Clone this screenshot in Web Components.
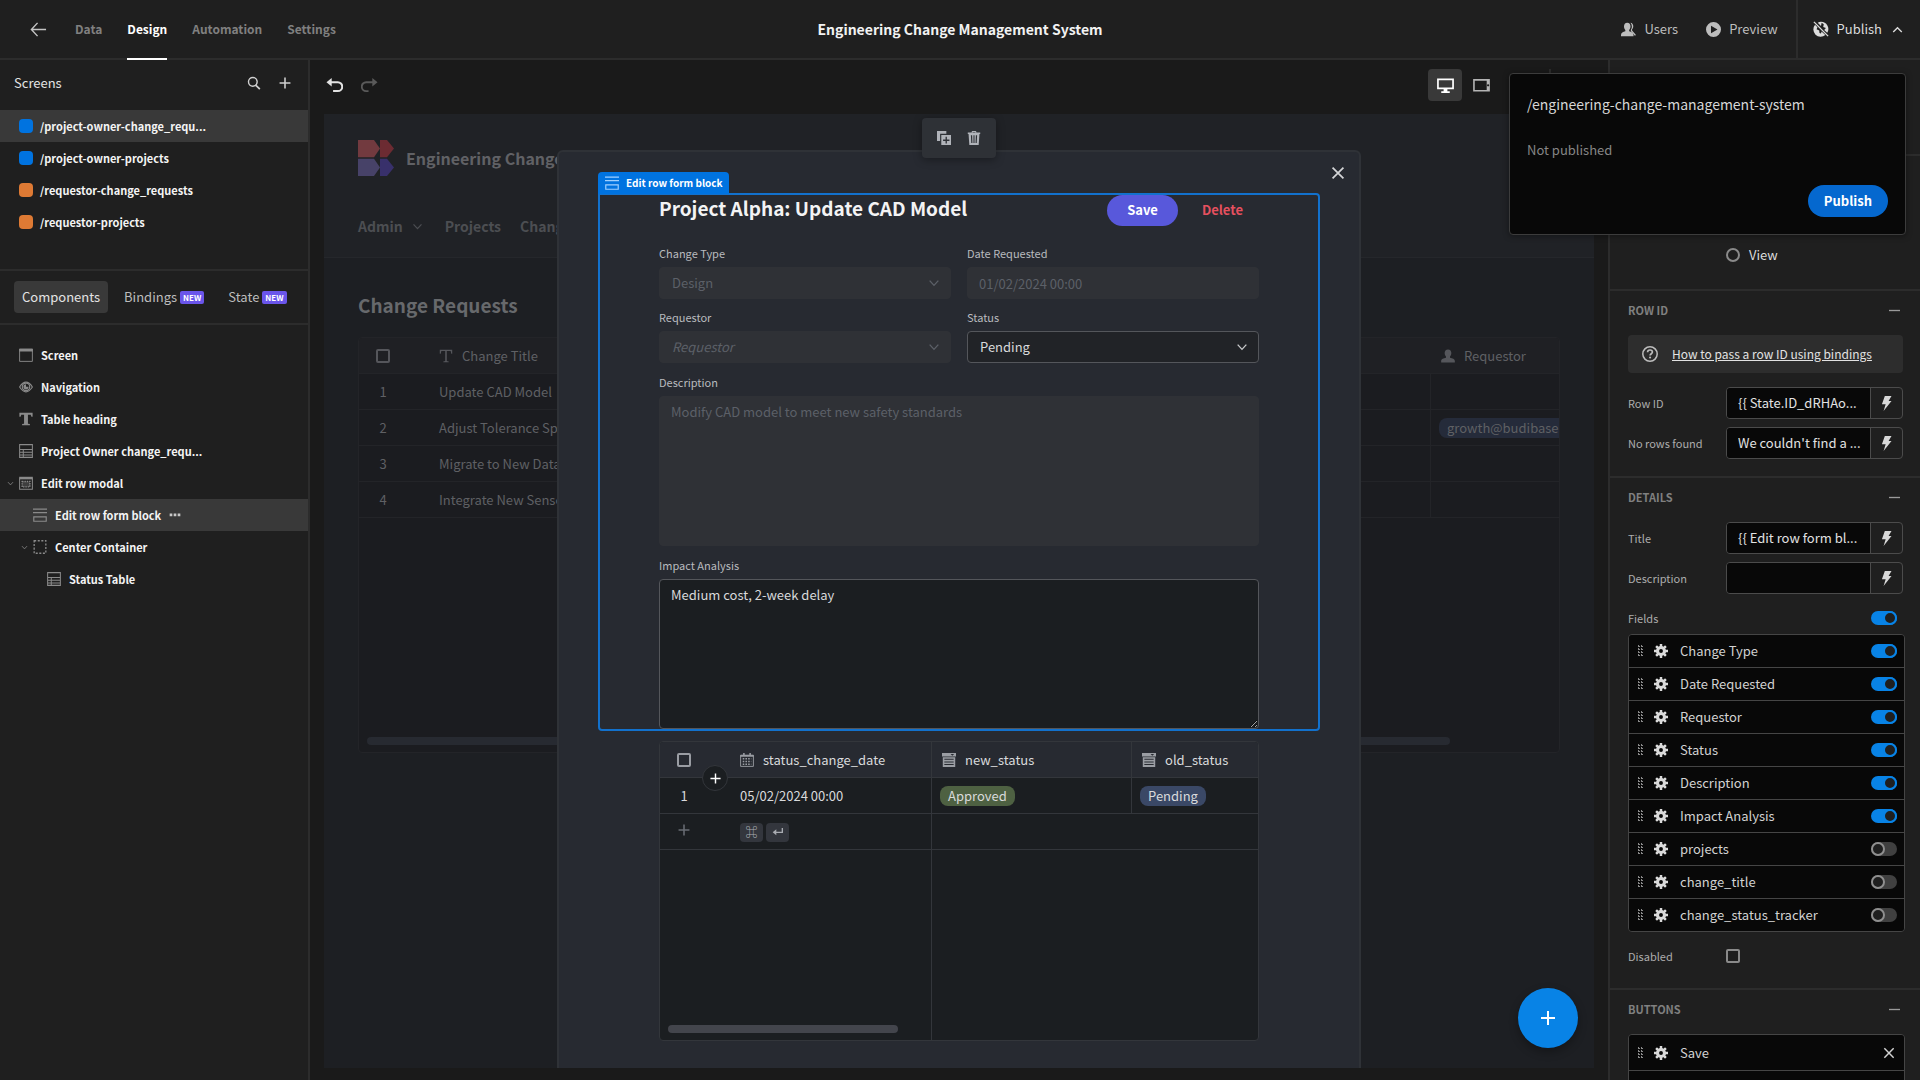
<!DOCTYPE html>
<html lang="en">
<head>
<meta charset="utf-8">
<title>Engineering Change Management System</title>
<style>
  html, body { margin: 0; height: 100%; }
  body {
    background: #1a1a1a;
    color: #e8e8e8;
    font-family: "Noto Sans CJK SC", "Noto Sans", sans-serif;
    font-size: 13px;
    line-height: 20px;
    overflow: hidden;
  }
</style>
</head>
<body>
<builder-app></builder-app>
<script>
const BASE = `
  *, *::before, *::after { box-sizing: border-box; }
  :host { display: block; box-sizing: border-box; }
  :host([hidden]) { display: none; }
  button, input, select, textarea { font: inherit; color: inherit; margin: 0; }
  button { background: none; border: 0; padding: 0; display: inline-flex; align-items: center; justify-content: center; }
  a { color: inherit; text-decoration: none; }
  h1, h2, p, ul { margin: 0; padding: 0; font-size: inherit; }
  ul { list-style: none; }
`;

function define(name, css, html, ready) {
  customElements.define(name, class extends HTMLElement {
    constructor() {
      super();
      this.attachShadow({ mode: "open" });
    }
    connectedCallback() {
      if (this.shadowRoot.childNodes.length) return;
      const t = document.createElement("template");
      t.innerHTML = `<style>${BASE}${css}</style>` + (typeof html === "function" ? html(this) : html);
      this.shadowRoot.append(t.content.cloneNode(true));
      if (ready) ready(this);
    }
  });
}

/* ---------- icons, drawn on an 18 unit grid ---------- */
const S = 'fill="none" stroke="currentColor"';
const ICONS = {
  back: `<path ${S} stroke-width="1.5" d="M17 9H1.5M8 2L1.5 9L8 16"/>`,
  search: `<circle ${S} stroke-width="1.8" cx="7.5" cy="7.5" r="5.6"/><path ${S} stroke-width="2.2" d="M11.5 12l5 5"/>`,
  plus: `<path ${S} stroke-width="2" d="M9 2v14M2 9h14"/>`,
  undo: `<path fill="currentColor" d="M6 1v9L.5 5.500z"/><path ${S} stroke-width="2.200" d="M5 5.500h7.500a3.900 3.900 0 0 1 0 9.400H7.500"/>`,
  redo: `<path fill="currentColor" d="M12 1v9l5.500-4.500z"/><path ${S} stroke-width="2" d="M13 5.500H5.500a3.900 3.900 0 0 0 0 9.400H8"/>`,
  desktop: `<path ${S} stroke-width="1.800" d="M1 2.500h16v9.600H1z"/><path fill="currentColor" d="M7 12h4v3h2.500v2h-9v-2H7z"/>`,
  tablet: `<path ${S} stroke-width="1.700" d="M1 3h16v11.500H1z"/><path fill="currentColor" d="M14.500 3h2.500v11.500h-2.500z"/><circle cx="16" cy="8.800" r="1.200" fill="#1a1a1a"/>`,
  users: `<path fill="currentColor" d="M7.500 1c2.600 0 3.900 1.900 3.900 4.300 0 1.900-.7 3.300-1.600 4.200v1.600c2.700.7 5.200 1.600 5.200 4.400V17H0v-1.500c0-2.800 2.500-3.700 5.200-4.400V9.500C4.300 8.600 3.600 7.200 3.600 5.300 3.600 2.900 4.900 1 7.500 1z"/><path fill="currentColor" d="M11.300.8c2.300.2 3.400 2 3.400 4.200 0 1.700-.6 2.900-1.400 3.800v1.300l4.700 5.500-1.300.9-4.900-5.600V9.200c.8-1.100 1.300-2.400 1.200-4.200-.1-1.700-.700-3.100-1.700-4.200z"/>`,
  play: `<path fill="currentColor" fill-rule="evenodd" d="M9 0a9 9 0 1 1 0 18A9 9 0 0 1 9 0zM6 4.500v9L13.800 9z"/>`,
  offline: `<path fill="currentColor" d="M9 .8a8.200 8.200 0 0 1 7 12.500L12.600 10l1.900-2-3-1.300.6-3L9.700 2 9 5.600 5.300 2A8 8 0 0 1 9 .8zM2.300 4.300L5 7l-1 2.400 3 1.400.3 2.700 1.700.6.600-2.300 4.300 4A8.200 8.200 0 0 1 2.300 4.300z"/><path ${S} stroke-width="1.500" d="M1 1l16 16"/>`,
  up: `<path ${S} stroke-width="2.200" d="M2 13l7-7 7 7"/>`,
  down: `<path ${S} stroke-width="2" d="M2.500 5.500L9 12.500l6.500-7"/>`,
  copy: `<path fill="currentColor" d="M0 0h12v3.500H4V13H0z"/><path fill="currentColor" fill-rule="evenodd" d="M5.500 5H18v13H5.500zM11 7.500V11H7.800v1.700H11V16h1.700v-3.300H16V11h-3.300V7.500z"/>`,
  trash: `<path fill="currentColor" fill-rule="evenodd" d="M6 1.500C6 .5 6.500 0 7.500 0h3c1 0 1.500.5 1.500 1.500V2h5v1.800h-1L15 18H3L2 3.800H1V2h5zM7.200 2h3.600V1.200H7.200zM5 5.500l.5 10H7l-.4-10zm3.300 0v10h1.400v-10zm3.100 0l-.4 10h1.500l.5-10z"/>`,
  close: `<path ${S} stroke-width="2.200" d="M2 2l14 14M16 2L2 16"/>`,
  form: `<path ${S} stroke-width="1.500" d="M0 1.500h18M0 6h18M1 11.500h16v5.500H1z"/>`,
  screen: `<path ${S} stroke-width="1.200" d="M.8 1.500h16.400v15.700H.8z"/><path fill="currentColor" d="M.2 1h17.600v3.500H.2z"/>`,
  eye: `<path ${S} stroke-width="1.500" d="M.8 9C4 4 6.500 2.800 9 2.800S14 4 17.200 9C14 14 11.500 15.200 9 15.200S4 14 .8 9z"/><circle ${S} stroke-width="1.500" cx="9" cy="8.800" r="4.800"/><path fill="currentColor" d="M9 5.500a3.300 3.300 0 1 0 3.300 3.300H9z"/>`,
  text: `<path fill="currentColor" d="M.5 1h17v5H16l-1-2.500h-3.500V15L14 15.500V17H4v-1.500l2.500-.5V3.500H3L2 6H.5z"/>`,
  thin: `<path fill="currentColor" d="M1 1h16v5h-1.200L15 2.500h-5V15.500l2.500.6V17h-7v-.9l2.500-.6V2.500H3L2.200 6H1z"/>`,
  table: `<path ${S} stroke-width="1.300" d="M.8.8h16.400v16.400H.8zM.8 7.200h16.400M.8 10.500h16.400M.8 14h16.400M5.500 7.200v10"/>`,
  modal: `<path fill="currentColor" d="M.2 1h17.600v3.300H.2z"/><path ${S} stroke-width="1.300" d="M.8 3v14h16.400V3"/><path fill="currentColor" fill-opacity=".3" stroke="currentColor" stroke-width="1.800" stroke-dasharray="1.800 1.200" d="M4 7h10v7H4z"/>`,
  box: `<path ${S} stroke-width="1.700" stroke-dasharray="2.600 2" d="M1.500 1h15v16h-15z"/>`,
  dots: `<path fill="currentColor" d="M1 6.800h4v4H1zM7 6.800h4v4H7zM13 6.800h4v4h-4z"/>`,
  user: `<path fill="currentColor" d="M9 .5c2.900 0 4.300 2 4.300 4.600 0 2-.7 3.500-1.700 4.400v1.700c3 .7 6.200 1.600 6.200 4.500V17.500H.2v-1.800c0-2.900 3.200-3.800 6.200-4.500V9.500c-1-.9-1.700-2.400-1.700-4.400C4.700 2.500 6.100.5 9 .5z"/>`,
  calendar: `<path ${S} stroke-width="1.200" d="M.8 2.800h16.400v14.400H.8z"/><path fill="currentColor" d="M.5 2.500h17v2.400H.5zM4 0h2v4H4zM12 0h2v4h-2z"/><path ${S} stroke-width="2" stroke-dasharray="2 1.500" d="M3.500 7.500h11M3.500 11h11M3.500 14.500h11"/>`,
  select: `<path fill="currentColor" fill-rule="evenodd" d="M0 0h18v4.500H0zm11 1.200L13.300 3.500l2.300-2.300z"/><path fill="currentColor" fill-rule="evenodd" d="M1 5.500h16V18H1zm2 2v1.300h12V7.500zm0 3.300v1.300h12v-1.300zm0 3.300v1.300h12v-1.300z"/>`,
  enter: `<path fill="currentColor" d="M6.500 5v9L1 9.500z"/><path ${S} stroke-width="2" d="M5 9.500h10.500V3"/>`,
  help: `<circle ${S} stroke-width="1.700" cx="9" cy="9" r="8.100"/><path ${S} stroke-width="1.900" d="M6.300 7c0-1.600 1.100-2.500 2.700-2.500s2.700.9 2.700 2.300c0 1.900-2.600 2-2.600 4"/><circle cx="9.100" cy="13" r="1.200" fill="currentColor"/>`,
  bolt: `<path fill="currentColor" d="M7 0h8l-3.500 6H15L5.500 18 8 10H3.500z"/>`,
  gear: `<path ${S} stroke-width="3.200" d="M9 0v18M0 9h18M2.700 2.700l12.600 12.600M15.300 2.700L2.700 15.300"/><circle cx="9" cy="9" r="6.500" fill="currentColor"/><circle cx="9" cy="9" r="2.500" fill="#080808"/>`,
  minus: `<path ${S} stroke-width="2.200" d="M0 9h18"/>`,
  logo: `<path fill="#723a3f" d="M0 0h8l3 4.300-3 4.300H0z"/><path fill="#6c2b32" d="M11 0h3.500L18 4.300l-3.500 4.300H11z"/><path fill="#474268" d="M0 9.400h8l3 4.300-3 4.300H0z"/><path fill="#38306b" d="M11 9.400h3.500l3.500 4.300-3.500 4.300H11z"/>`
};
define("ui-icon", `
  :host { display: inline-block; flex: none; width: var(--size, 14px); height: var(--size, 14px); }
  svg { display: block; width: 100%; height: 100%; }
`, el => `<svg viewBox="0 0 18 18" aria-hidden="true">${ICONS[el.getAttribute("name")]}</svg>`);

/* ---------- top bar ---------- */
define("top-bar", `
  :host { background: #1f1f1f; border-bottom: 2px solid #2c2c2c; height: 60px; flex: none; }
  header { display: grid; grid-template-columns: 1fr auto 1fr; height: 58px; align-items: center; }
  nav { display: flex; gap: 25px; padding-left: 30px; align-items: center; font-size: 12px; font-weight: 700; color: #808080; height: 58px; }
  nav button { width: 20px; justify-content: flex-start; color: #c4c4c4; --size: 17px; }
  nav a { display: flex; align-items: center; height: 60px; margin-bottom: -2px; border-bottom: 2px solid transparent; }
  nav a[aria-current] { color: #fff; border-color: #fff; }
  h1 { font-size: 14px; font-weight: 700; color: #f2f2f2; }
  .right { display: flex; justify-content: flex-end; align-items: center; height: 58px; color: #bdbdbd; }
  .right button { gap: 8px; margin-right: 28px; --size: 15px; }
  .right .preview { margin-right: 18px; }
  .right .pub { gap: 8px; margin: 0; height: 58px; border-left: 2px solid #2c2c2c; padding: 0 17px 0 15px; color: #dcdcdc; --size: 16px; }
  .pub .chev { --size: 11px; margin-left: 2px; }
`, `
  <header>
    <nav>
      <button aria-label="Back"><ui-icon name="back"></ui-icon></button>
      <a href="#data">Data</a><a href="#design" aria-current="page">Design</a><a href="#automation">Automation</a><a href="#settings">Settings</a>
    </nav>
    <h1>Engineering Change Management System</h1>
    <div class="right">
      <button><ui-icon name="users"></ui-icon>Users</button>
      <button class="preview"><ui-icon name="play"></ui-icon>Preview</button>
      <button class="pub"><ui-icon name="offline"></ui-icon>Publish<ui-icon class="chev" name="up"></ui-icon></button>
    </div>
  </header>`);

/* ---------- left panel ---------- */
define("nav-row", `
  :host { display: flex; align-items: center; height: 32px; padding-left: calc(4px + var(--depth, 0) * 14px); font-size: 11px; font-weight: 700; color: #f4f4f4; }
  :host([selected]) { background: #393939; }
  .chev { width: 15px; display: flex; padding-left: 3px; --size: 7px; color: #8c8c8c; }
  .mark { display: flex; width: 14px; color: #8a8a8a; --size: 14px; }
  .dot { width: 14px; height: 14px; border-radius: 4px; background: var(--dot); }
  .label { margin-left: 8px; }
  :host(:not([icon])) .label { margin-left: 7px; }
  .more { margin-left: 8px; color: #c8c8c8; --size: 12px; display: flex; }
`, el => `
  <span class="chev">${el.hasAttribute("open") ? '<ui-icon name="down"></ui-icon>' : ""}</span>
  <span class="mark">${el.hasAttribute("icon") ? `<ui-icon name="${el.getAttribute("icon")}"></ui-icon>` : '<span class="dot"></span>'}</span>
  <span class="label"><slot></slot></span>
  ${el.hasAttribute("more") ? '<span class="more"><ui-icon name="dots"></ui-icon></span>' : ""}`);

define("left-panel", `
  :host { width: 310px; flex: none; background: #1f1f1f; border-right: 2px solid #2c2c2c; }
  .head { display: flex; align-items: center; height: 50px; padding: 0 16px 4px 14px; gap: 17px; color: #d0d0d0; --size: 14px; }
  h2 { flex: 1; font-weight: 400; color: #e4e4e4; }
  .list { padding-bottom: 31px; }
  .blue { --dot: #0073e0; }
  .orange { --dot: #de7a34; }
  .tabs { display: flex; align-items: center; border: solid #2c2c2c; border-width: 2px 0; height: 56px; padding: 0 14px; color: #bcbcbc; }
  .tabs button { height: 32px; padding: 0 8px; border-radius: 4px; gap: 3px; margin-right: 8px; }
  .tabs button[aria-selected=true] { background: #393939; color: #e4e4e4; }
  .new { background: #6a55ea; color: #fff; font-size: 8px; font-weight: 700; line-height: 13px; padding: 0 3px; border-radius: 2px; }
  .tree { padding-top: 14px; }
  .d1 { --depth: 1; } .d2 { --depth: 2; }
`, `
  <div class="head"><h2>Screens</h2>
    <button aria-label="Search"><ui-icon name="search"></ui-icon></button>
    <button aria-label="Add screen"><ui-icon name="plus"></ui-icon></button></div>
  <div class="list">
    <nav-row class="blue" selected>/project-owner-change_requ...</nav-row>
    <nav-row class="blue">/project-owner-projects</nav-row>
    <nav-row class="orange">/requestor-change_requests</nav-row>
    <nav-row class="orange">/requestor-projects</nav-row>
  </div>
  <div class="tabs" role="tablist">
    <button role="tab" aria-selected="true">Components</button>
    <button role="tab">Bindings<span class="new">NEW</span></button>
    <button role="tab">State<span class="new">NEW</span></button>
  </div>
  <div class="tree">
    <nav-row icon="screen">Screen</nav-row>
    <nav-row icon="eye">Navigation</nav-row>
    <nav-row icon="text">Table heading</nav-row>
    <nav-row icon="table">Project Owner change_requ...</nav-row>
    <nav-row icon="modal" open>Edit row modal</nav-row>
    <nav-row class="d1" icon="form" selected more>Edit row form block</nav-row>
    <nav-row class="d1" icon="box" open>Center Container</nav-row>
    <nav-row class="d2" icon="table">Status Table</nav-row>
  </div>`);

/* ---------- data grids ---------- */
const GRID = `
  :host { display: block; position: relative; background: var(--grid-bg); border: 1px solid var(--grid-line); border-radius: 4px; overflow: hidden; }
  table { table-layout: fixed; border-collapse: separate; border-spacing: 0; text-align: left; }
  th, td { height: 36px; padding: 0 10px; font-weight: 400; border-bottom: 1px solid var(--grid-line); border-right: 1px solid var(--grid-line); white-space: nowrap; overflow: hidden; }
  th { background: var(--grid-head); }
  th:first-child, td:first-child { border-right: 0; padding: 0 22px 0 0; text-align: center; }
  .h { display: flex; align-items: center; gap: 9px; --size: 14px; }
  .h ui-icon { color: var(--grid-icon); }
  input { appearance: none; display: block; width: 14px; height: 14px; border: 2px solid var(--grid-icon); border-radius: 2px; margin: 0 auto; }
  .tag { display: inline-block; line-height: 20px; height: 20px; border-radius: 8px; padding: 0 8px; vertical-align: middle; margin-left: -2px; }
  .bar { position: absolute; left: 8px; bottom: 7px; height: 8px; border-radius: 4px; background: var(--grid-bar); }
`;
define("requests-grid", GRID + `
  :host { --grid-bg: #1b1c20; --grid-head: #1f2024; --grid-line: #232428; --grid-icon: #55565b; --grid-bar: #272a31; height: 416px; color: #5f6064; }
  table { width: 1472px; }
  th:not(:last-child) { border-right: 0; }
  .tag { background: #252b3a; }
  .bar { width: calc(100% - 117px); }
`, () => `
  <table>
    <colgroup><col style="width:70px"><col style="width:202px"><col style="width:200px"><col style="width:200px"><col style="width:200px"><col style="width:200px"><col style="width:200px"><col style="width:200px"></colgroup>
    <thead><tr><th><input type="checkbox" aria-label="Select all"></th><th><span class="h"><ui-icon name="thin"></ui-icon>Change Title</span></th><th></th><th></th><th></th><th></th><th><span class="h"><ui-icon name="user"></ui-icon>Requestor</span></th><th></th></tr></thead>
    <tbody>${["Update CAD Model", "Adjust Tolerance Spe", "Migrate to New Data", "Integrate New Senso"].map((t, i) =>
      `<tr><td>${i + 1}</td><td>${t}</td><td></td><td></td><td></td><td></td><td>${i === 1 ? '<span class="tag">growth@budibase.com</span>' : ""}</td><td></td></tr>`).join("")}</tbody>
  </table><div class="bar"></div>`);

define("status-grid", GRID + `
  :host { --grid-bg: #1b1e21; --grid-head: #272a31; --grid-line: #33363b; --grid-icon: #9a9da3; --grid-bar: #43454c; color: #d9dadc; height: 300px; }
  table { width: 672px; }
  .tag.green { background: #4e6142; } .tag.blue { background: #3a4866; }
  kbd { font: inherit; font-size: 12px; font-weight: 700; display: inline-flex; align-items: center; justify-content: center; width: 23px; height: 19px; border-radius: 4px; background: #33363d; color: #a9acb2; --size: 12px; vertical-align: middle; margin-right: 3px; }
  .fill td { height: 190px; border-bottom: 0; }
  .add { color: #686c73; --size: 14px; }
  .bar { width: 230px; }
`, `
  <table>
    <colgroup><col style="width:70px"><col style="width:202px"><col style="width:200px"><col style="width:200px"></colgroup>
    <thead><tr><th><input type="checkbox" aria-label="Select all"></th>
      <th><span class="h"><ui-icon name="calendar"></ui-icon>status_change_date</span></th>
      <th><span class="h"><ui-icon name="select"></ui-icon>new_status</span></th>
      <th><span class="h"><ui-icon name="select"></ui-icon>old_status</span></th></tr></thead>
    <tbody>
      <tr><td>1</td><td>05/02/2024 00:00</td><td><span class="tag green">Approved</span></td><td><span class="tag blue">Pending</span></td></tr>
      <tr><td><button class="add" aria-label="Add row"><ui-icon name="plus"></ui-icon></button></td><td><kbd>⌘</kbd><kbd><ui-icon name="enter"></ui-icon></kbd></td><td colspan="2"></td></tr>
      <tr class="fill"><td></td><td></td><td colspan="2"></td></tr>
    </tbody>
  </table><div class="bar"></div>`);

/* ---------- form fields of the preview ---------- */
define("form-field", `
  :host { font-size: 13px; }
  label { display: block; font-size: 11px; line-height: 16px; color: #b9bbbf; margin-bottom: 6px; }
  .box { position: relative; display: flex; }
  input, select, textarea { appearance: none; display: block; width: 100%; height: 32px; padding: 0 12px; border: 1px solid #54565b; border-radius: 4px; background: #212327; color: #d8d9db; outline: 0; }
  input { padding: 0 11px; }
  textarea { height: 150px; padding: 5px 11px; background: #1b1e21; resize: vertical; }
  :disabled { opacity: 1; background: #2f3136; border-color: #2f3136; color: #5c6068; -webkit-text-fill-color: #5c6068; resize: none; }
  :host([placeholder]) select { font-style: italic; }
  ui-icon { position: absolute; right: 11px; top: 10px; --size: 12px; color: #c8c9cb; }
  select:disabled + ui-icon { color: #5c6068; }
`, el => {
  const dis = el.hasAttribute("disabled") ? "disabled" : "", v = el.getAttribute("value");
  const kind = el.getAttribute("kind");
  const control = kind === "select" ? `<select id="c" ${dis}><option>${v}</option></select><ui-icon name="down"></ui-icon>`
    : kind === "area" ? `<textarea id="c" ${dis}>${v}</textarea>` : `<input id="c" type="text" value="${v}" ${dis}>`;
  return `<label for="c">${el.getAttribute("label")}</label><div class="box">${control}</div>`;
});

define("form-block", `
  :host { position: relative; border: 2px solid #1271cd; border-radius: 0 4px 4px 4px; padding: 0 59px; height: 538px; }
  .name { position: absolute; left: -2px; top: -23px; height: 22px; background: #0073e0; color: #fff; font-size: 10px; font-weight: 700; display: flex; align-items: center; gap: 7px; padding: 0 6px 0 7px; border-radius: 4px 4px 0 0; }
  .name ui-icon { color: #9fd0ff; }
  .title { display: flex; align-items: flex-start; height: 31px; font-weight: 700; }
  h2 { flex: 1; font-size: 19px; line-height: 26px; color: #f3f3f4; }
  .title button { height: 31px; border-radius: 16px; padding: 0 16px 1px; }
  .title .save { background: #5858db; color: #fff; padding: 0 20px 1px; margin-right: 8px; }
  .delete { color: #e5505f; }
  .fields { display: grid; grid-template-columns: 1fr 1fr; gap: 10px 16px; padding-top: 19px; }
  .wide { grid-column: 1 / -1; padding-top: 1px; }
`, `
  <div class="name"><ui-icon name="form"></ui-icon>Edit row form block</div>
  <div class="title"><h2>Project Alpha: Update CAD Model</h2><button class="save">Save</button><button class="delete">Delete</button></div>
  <div class="fields">
    <form-field kind="select" label="Change Type" value="Design" disabled></form-field>
    <form-field kind="input" label="Date Requested" value="01/02/2024 00:00" disabled></form-field>
    <form-field kind="select" label="Requestor" value="Requestor" placeholder disabled></form-field>
    <form-field kind="select" label="Status" value="Pending"></form-field>
    <form-field class="wide" kind="area" label="Description" value="Modify CAD model to meet new safety standards" disabled></form-field>
    <form-field class="wide" kind="area" label="Impact Analysis" value="Medium cost, 2-week delay"></form-field>
  </div>`);

define("edit-modal", `
  :host { position: relative; width: 804px; max-width: 100%; background: #272a31; border: 2px solid #2f3237; border-bottom: 0; border-radius: 6px 6px 0 0; padding: 41px 39px 0; }
  .close { position: absolute; right: 14px; top: 14px; --size: 14px; color: #d4d5d7; }
  .tools { position: absolute; left: 363px; top: -34px; width: 74px; height: 40px; display: flex; align-items: center; justify-content: center; gap: 16px; background: #2e3136; border-radius: 4px; box-shadow: 0 2px 8px rgba(0,0,0,.35); color: #b0b3b9; --size: 14px; }
  .table { position: relative; margin: 10px 61px 0; }
  .insert { position: absolute; left: 43px; top: 24px; width: 26px; height: 26px; border-radius: 50%; background: #1b1e21; border: 1px solid #33363b; color: #fff; --size: 13px; }
`, `
  <div class="tools"><button aria-label="Duplicate"><ui-icon name="copy"></ui-icon></button><button aria-label="Delete"><ui-icon name="trash"></ui-icon></button></div>
  <button class="close" aria-label="Close"><ui-icon name="close"></ui-icon></button>
  <form-block></form-block>
  <div class="table"><status-grid></status-grid><button class="insert" aria-label="Insert row"><ui-icon name="plus"></ui-icon></button></div>`);

/* ---------- canvas ---------- */
define("app-preview", `
  :host { position: relative; flex: 1; overflow: hidden; background: #1d1f23; color: #5b5d61; margin: 0 14px 12px; min-height: 0; }
  header { background: #202226; border-bottom: 1px solid #25272b; padding: 26px 34px 0; height: 144px; }
  .brand { display: flex; align-items: center; gap: 12px; height: 36px; font-size: 16px; font-weight: 700; color: #606165; --size: 36px; }
  nav { display: flex; gap: 19px; padding-top: 39px; line-height: 22px; font-size: 14px; font-weight: 700; color: #4c4e52; }
  nav a { display: flex; align-items: center; gap: 9px; --size: 11px; }
  nav a:first-child { margin-right: 3px; }
  main { padding: 31px 34px 0; }
  h2 { font-size: 19px; line-height: 32px; color: #67696c; margin-bottom: 16px; }
  .overlay { position: absolute; inset: 36px 0 0; display: flex; justify-content: center; }
  .fab { position: absolute; right: 16px; bottom: 20px; width: 60px; height: 60px; border-radius: 50%; background: #0883e6; color: #fff; box-shadow: 0 4px 10px rgba(0,0,0,.3); --size: 18px; }
`, `
  <header><div class="brand"><ui-icon name="logo"></ui-icon>Engineering Change</div>
    <nav><a href="#admin">Admin<ui-icon name="down"></ui-icon></a><a href="#projects">Projects</a><a href="#change">Chang</a></nav></header>
  <main><h2>Change Requests</h2><requests-grid></requests-grid></main>
  <div class="overlay"><edit-modal></edit-modal></div>
  <button class="fab" aria-label="Add component"><ui-icon name="plus"></ui-icon></button>`);

define("design-canvas", `
  :host { flex: 1; min-width: 0; display: flex; flex-direction: column; background: #1a1a1a; }
  .bar { flex: none; display: flex; align-items: center; height: 54px; padding: 0 57px 4px 16px; --size: 17px; }
  .undo { color: #e2e2e2; margin-right: 18px; } .redo { color: #5a5a5a; }
  .spring { flex: 1; }
  .dev { width: 34px; height: 32px; border-radius: 4px; color: #b4b4b4; margin-right: 2px; }
  .dev[aria-pressed] { background: #393939; color: #fff; }
  .sep { width: 2px; height: 32px; background: #2c2c2c; margin-left: 49px; }
`, `
  <div class="bar"><button class="undo" aria-label="Undo"><ui-icon name="undo"></ui-icon></button><button class="redo" aria-label="Redo"><ui-icon name="redo"></ui-icon></button>
    <span class="spring"></span>
    <button class="dev" aria-pressed="true" aria-label="Desktop"><ui-icon name="desktop"></ui-icon></button><button class="dev" aria-label="Tablet"><ui-icon name="tablet"></ui-icon></button><span class="sep"></span></div>
  <app-preview></app-preview>`);

/* ---------- right panel ---------- */
define("panel-section", `
  :host { border-top: 2px solid #2c2c2c; padding: 0 17px 0 18px; }
  .head { display: flex; align-items: center; justify-content: space-between; height: 38px; padding-right: 3px; color: #808080; font-size: 11px; font-weight: 700; }
  .head button { --size: 11px; color: #9a9a9a; }
  .body { display: flex; flex-direction: column; gap: 8px; padding-top: 6px; }
`, el => `<div class="head"><span>${el.getAttribute("heading")}</span><button aria-label="Collapse"><ui-icon name="minus"></ui-icon></button></div><div class="body"><slot></slot></div>`);

define("setting-row", `
  :host { display: flex; align-items: center; min-height: 32px; }
  label { width: 98px; flex: none; font-size: 11px; color: #adadad; }
  .box { flex: 1; min-width: 0; display: flex; height: 32px; border: 1px solid #4b4b4b; border-radius: 4px; overflow: hidden; }
  .box input { flex: 1; min-width: 0; border: 0; outline: 0; background: #080808; padding: 0 0 0 11px; color: #e2e2e2; }
  .box button { width: 32px; border-left: 1px solid #4b4b4b; color: #d8d8d8; --size: 15px; }
  .tick { appearance: none; width: 14px; height: 14px; border: 2px solid #8a8a8a; border-radius: 2px; }
`, el => `<label for="c">${el.getAttribute("label")}</label>` + (el.hasAttribute("check")
  ? '<input class="tick" id="c" type="checkbox">'
  : `<div class="box"><input id="c" type="text" value="${el.getAttribute("value")}"><button aria-label="Bind value"><ui-icon name="bolt"></ui-icon></button></div>`));

define("ui-toggle", `
  :host { display: flex; }
  input { appearance: none; width: 26px; height: 14px; border-radius: 7px; background: #404040; display: flex; }
  input::before { content: ""; width: 14px; height: 14px; border-radius: 50%; background: #1f1f1f; border: 2px solid #8f8f8f; }
  input:checked { background: #0883e6; justify-content: flex-end; }
  input:checked::before { border-color: #0883e6; }
`, el => `<input type="checkbox" aria-label="${el.getAttribute("label")}" ${el.hasAttribute("on") ? "checked" : ""}>`);

define("item-row", `
  :host { display: flex; align-items: center; height: var(--row, 33px); padding: 0 7px 0 9px; background: #080808; color: #d2d2d2; border-bottom: 1px solid #454545; }
  .drag { width: 6px; height: 12px; margin-right: 10px; background: conic-gradient(from 270deg, #8a8a8a 25%, transparent 0) 0 0 / 3px 3px; }
  .gear { margin-right: 12px; color: #dadada; --size: 14px; }
  .label { flex: 1; }
  .x { --size: 12px; padding-right: 2px; }
`, el => `<span class="drag"></span><button class="gear" aria-label="Settings"><ui-icon name="gear"></ui-icon></button><span class="label">${el.getAttribute("label")}</span>` +
  (el.hasAttribute("button") ? '<button class="x" aria-label="Remove"><ui-icon name="close"></ui-icon></button>' : `<ui-toggle label="${el.getAttribute("label")}" ${el.hasAttribute("on") ? "on" : ""}></ui-toggle>`));

define("right-panel", `
  :host { width: 312px; flex: none; background: #1f1f1f; border-left: 2px solid #2c2c2c; overflow: hidden; }
  .top { height: 96px; border-bottom: 2px solid #2c2c2c; }
  .view { height: 133px; padding: 0 0 24px 116px; display: flex; align-items: flex-end; }
  .view label { display: flex; align-items: center; gap: 9px; color: #dcdcdc; }
  .view input { appearance: none; width: 14px; height: 14px; border: 2px solid #8a8a8a; border-radius: 50%; }
  .info { display: flex; align-items: center; gap: 14px; height: 38px; background: #2d2d2d; border-radius: 4px; padding-left: 14px; margin-bottom: 6px; color: #bdbdbd; --size: 16px; }
  .info a { font-size: 12px; text-decoration: underline; color: #e2e2e2; }
  .rowid { padding-bottom: 17px; }
  .fields { display: flex; align-items: center; justify-content: space-between; padding: 6px 6px 0 0; font-size: 11px; color: #adadad; margin-bottom: -2px; }
  .list { border: 1px solid #454545; border-radius: 4px; overflow: hidden; margin-right: -2px; }
  .list > :last-child { border-bottom: 0; height: 32px; }
  .details { padding-bottom: 16px; }
  .buttons { --row: 36px; }
`, `
  <div class="top"></div>
  <div class="view"><label><input type="radio" name="kind">View</label></div>
  <panel-section heading="ROW ID" class="rowid">
    <div class="info"><ui-icon name="help"></ui-icon><a href="#docs">How to pass a row ID using bindings</a></div>
    <setting-row label="Row ID" value="{{ State.ID_dRHAo..."></setting-row>
    <setting-row label="No rows found" value="We couldn't find a ..."></setting-row>
  </panel-section>
  <panel-section heading="DETAILS" class="details">
    <setting-row label="Title" value="{{ Edit row form bl..."></setting-row>
    <setting-row label="Description" value=""></setting-row>
    <div class="fields"><span>Fields</span><ui-toggle label="All fields" on></ui-toggle></div>
    <div class="list">
      <item-row label="Change Type" on></item-row><item-row label="Date Requested" on></item-row><item-row label="Requestor" on></item-row>
      <item-row label="Status" on></item-row><item-row label="Description" on></item-row><item-row label="Impact Analysis" on></item-row>
      <item-row label="projects"></item-row><item-row label="change_title"></item-row><item-row label="change_status_tracker"></item-row>
    </div>
    <setting-row label="Disabled" check></setting-row>
  </panel-section>
  <panel-section heading="BUTTONS">
    <div class="list buttons"><item-row label="Save" button></item-row><item-row label="" button></item-row></div>
  </panel-section>`);

/* ---------- publish popover ---------- */
define("publish-popover", `
  :host { position: absolute; right: 14px; top: 73px; width: 397px; height: 162px; background: #080808; border: 1px solid #3c3c3c; border-radius: 4px; padding: 20px 17px 17px 17px; display: flex; flex-direction: column; box-shadow: 0 1px 6px rgba(0,0,0,.4); }
  a { font-size: 14px; color: #d6d6d6; }
  p { margin-top: 26px; color: #868686; }
  button { margin-top: auto; align-self: flex-end; height: 32px; padding: 0 16px; border-radius: 16px; background: #0568cf; color: #fff; font-weight: 700; }
`, `<a href="#app">/engineering-change-management-system</a><p>Not published</p><button>Publish</button>`);

define("builder-app", `
  :host { display: flex; flex-direction: column; height: 100vh; position: relative; overflow: hidden; }
  .body { flex: 1; display: flex; min-height: 0; }
`, `<top-bar></top-bar><div class="body"><left-panel></left-panel><design-canvas></design-canvas><right-panel></right-panel></div><publish-popover></publish-popover>`);
</script>
</body>
</html>
